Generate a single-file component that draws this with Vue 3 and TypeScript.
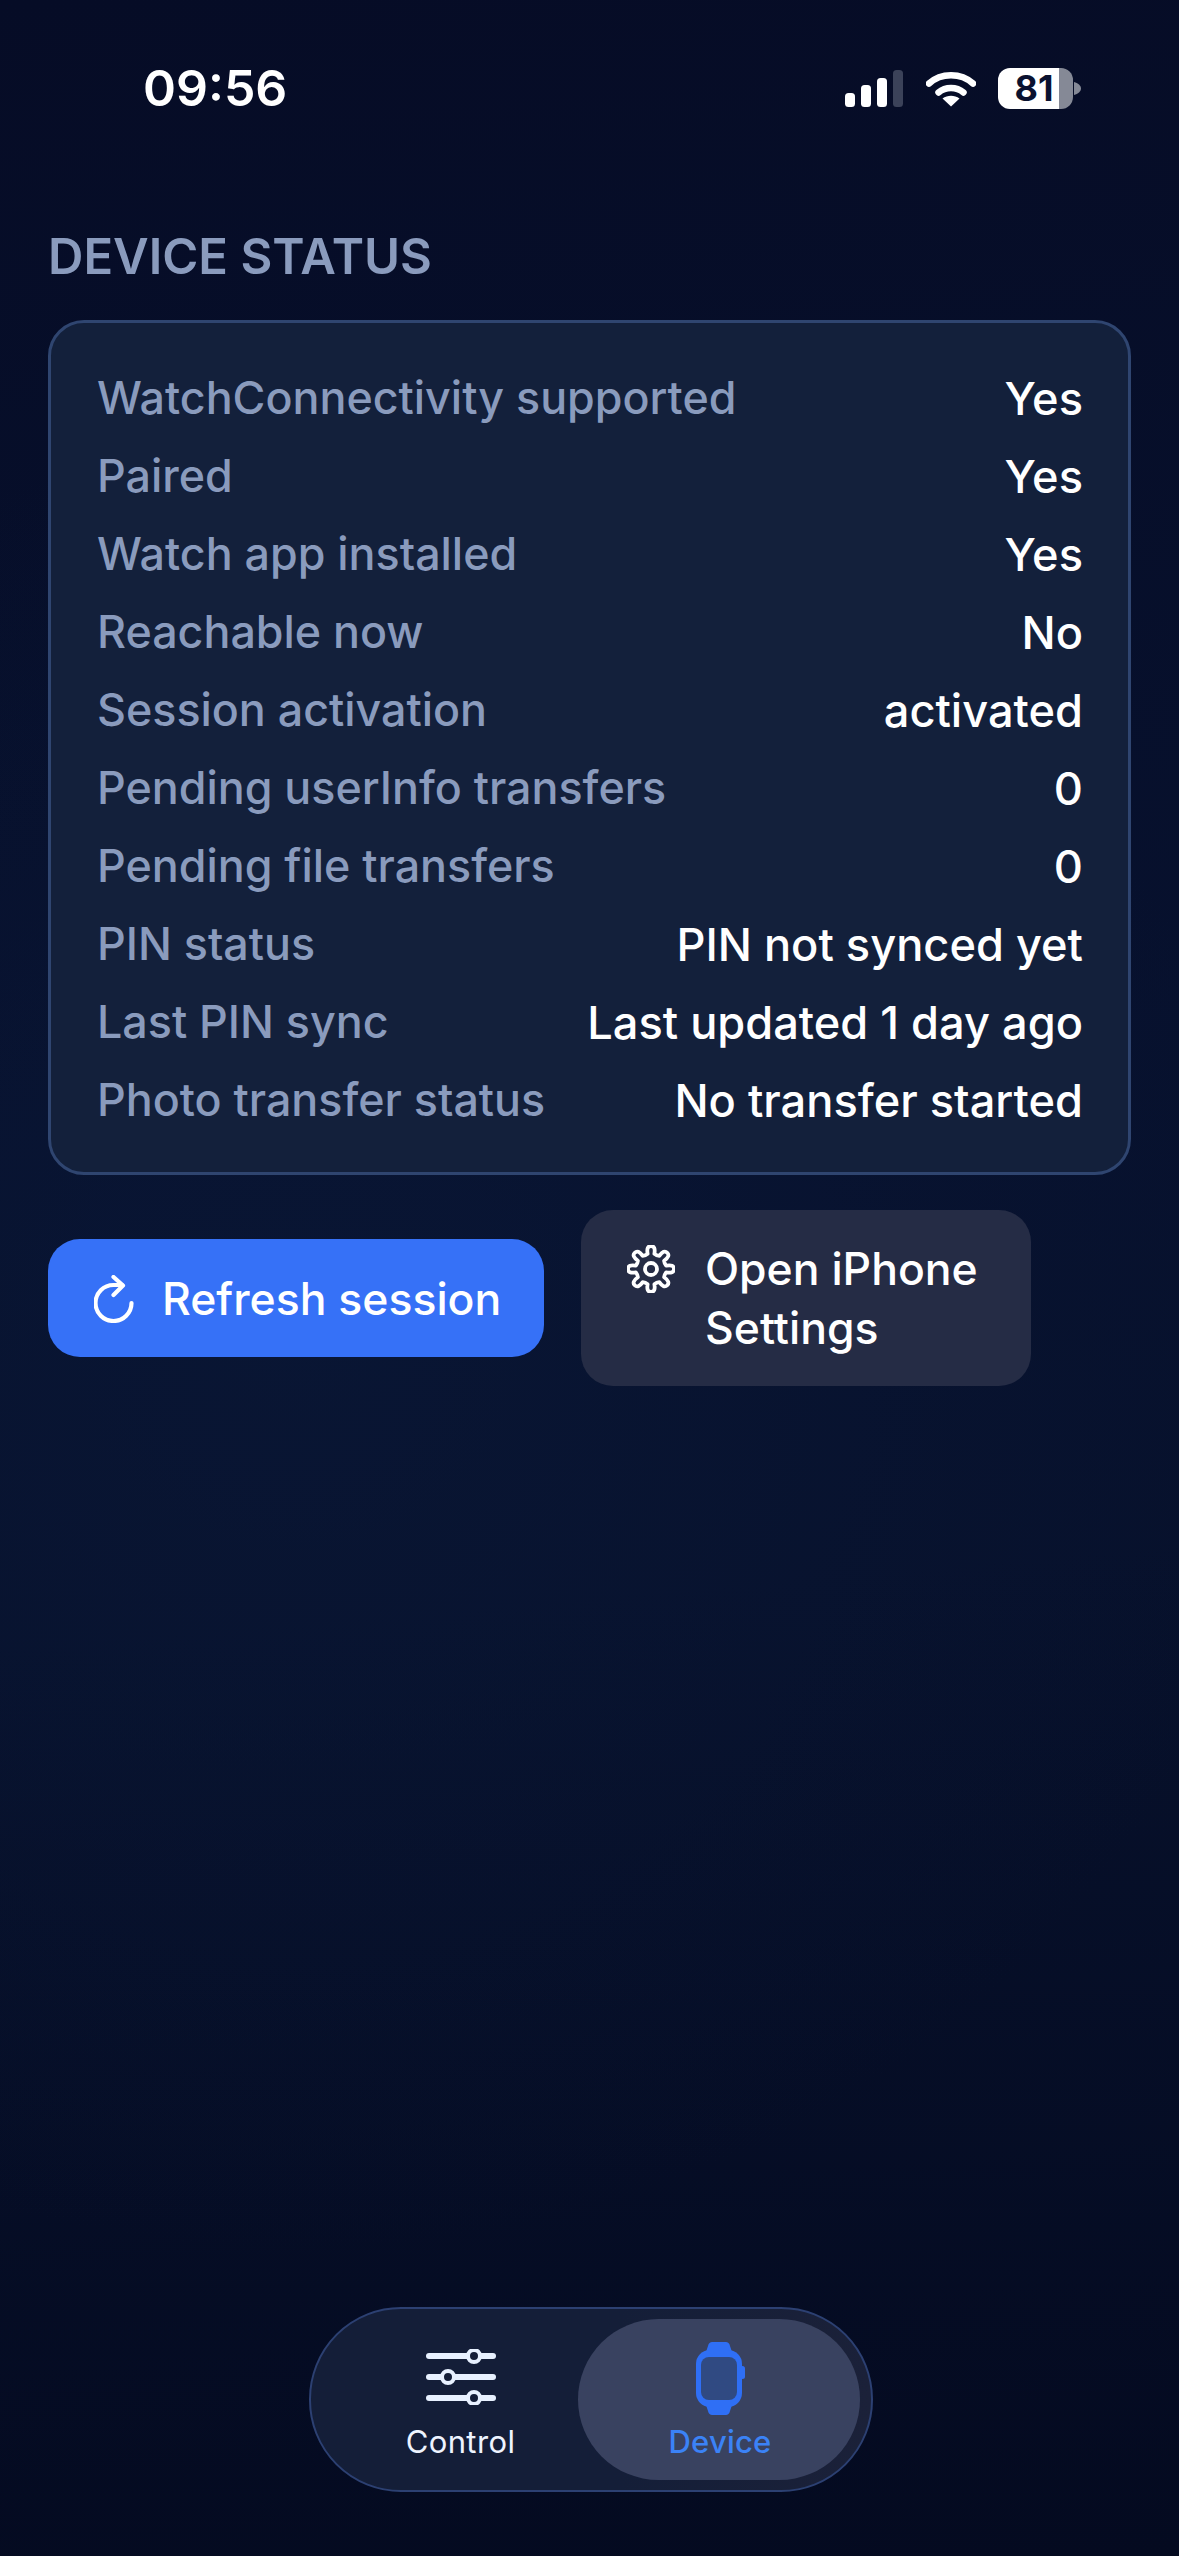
<script setup lang="ts">
const rows: Array<[string, string]> = [
  ['WatchConnectivity supported', 'Yes'],
  ['Paired', 'Yes'],
  ['Watch app installed', 'Yes'],
  ['Reachable now', 'No'],
  ['Session activation', 'activated'],
  ['Pending userInfo transfers', '0'],
  ['Pending file transfers', '0'],
  ['PIN status', 'PIN not synced yet'],
  ['Last PIN sync', 'Last updated 1 day ago'],
  ['Photo transfer status', 'No transfer started'],
];

// 8-tooth gear outline, centred on 24,24
const gearPath = (() => {
  const teeth = 8;
  const out: string[] = [];
  for (let i = 0; i < teeth; i++) {
    const a = (i / teeth) * Math.PI * 2 - Math.PI / 2;
    const step = (Math.PI * 2) / teeth;
    const p = (r: number, t: number) =>
      `${(24 + r * Math.cos(t)).toFixed(2)} ${(24 + r * Math.sin(t)).toFixed(2)}`;
    out.push(`${i === 0 ? 'M' : 'L'}${p(15.5, a - step * 0.28)}`);
    out.push(`Q${p(23.5, a - step * 0.26)} ${p(23, a)}`);
    out.push(`Q${p(23.5, a + step * 0.26)} ${p(15.5, a + step * 0.28)}`);
    out.push(`Q${p(14.5, a + step * 0.5)} ${p(15.5, a + step * 0.72)}`);
  }
  return out.join(' ') + ' Z';
})();
</script>

<template>
  <div class="screen">
    <div class="status-bar">
      <span class="time">09:56</span>
      <div class="status-icons">
        <svg class="signal" width="58" height="37" viewBox="0 0 58 37">
          <rect x="0" y="23" width="10" height="14" rx="3.5" fill="#fff" />
          <rect x="16" y="15" width="10" height="22" rx="3.5" fill="#fff" />
          <rect x="32" y="8" width="10" height="29" rx="3.5" fill="#fff" />
          <rect x="48" y="0" width="10" height="37" rx="3.5" fill="#3b4259" />
        </svg>
        <svg class="wifi" width="50" height="38" viewBox="0 0 50 38" fill="none">
          <path d="M3 14.5C15 3.5 35 3.5 47 14.5" stroke="#fff" stroke-width="6.5" stroke-linecap="round" />
          <path d="M12.5 23.5C19.5 17.5 30.5 17.5 37.5 23.5" stroke="#fff" stroke-width="6.5" stroke-linecap="round" />
          <path d="M25 37.5L16.5 29.5C21.5 25.8 28.5 25.8 33.5 29.5Z" fill="#fff" />
        </svg>
        <div class="battery">
          <div class="battery-body">
            <span class="battery-level">81</span>
          </div>
          <svg class="battery-nub" width="7" height="13" viewBox="0 0 7 13">
            <path d="M0 0C4 1 7 3.500 7 6.500C7 9.500 4 12 0 13Z" fill="#858996" />
          </svg>
        </div>
      </div>
    </div>

    <main class="content">
      <h2 class="section-title">DEVICE STATUS</h2>
      <section class="card">
        <div v-for="row in rows" :key="row[0]" class="row">
          <span class="row-label">{{ row[0] }}</span>
          <span class="row-value">{{ row[1] }}</span>
        </div>
      </section>

      <div class="actions">
        <button class="btn btn-primary">
          <svg class="btn-icon" width="40" height="48" viewBox="0 0 40 48" fill="none" stroke="#fff" stroke-width="4.200" stroke-linecap="round" stroke-linejoin="round">
            <path d="M37.500 28A18 18 0 1 1 19.500 10H28" />
            <path d="M19.500 2L29 10.500L19.500 20" />
          </svg>
          <span>Refresh session</span>
        </button>
        <button class="btn btn-secondary">
          <svg class="gear" width="48" height="48" viewBox="0 0 48 48" fill="none" stroke="#fff" stroke-width="3.800" stroke-linejoin="round">
            <path :d="gearPath" />
            <circle cx="24" cy="24" r="6" />
          </svg>
          <span>Open iPhone Settings</span>
        </button>
      </div>
    </main>

    <nav class="tab-bar">
      <div class="tab tab-control">
        <svg width="70" height="56" viewBox="0 0 70 56" fill="none">
          <g stroke="#e8f1ff" stroke-width="6" stroke-linecap="round">
            <path d="M3 7H67" />
            <path d="M3 28H67" />
            <path d="M3 49H67" />
          </g>
          <g fill="#141e38" stroke="#e8f1ff" stroke-width="4">
            <circle cx="48" cy="7" r="6" />
            <circle cx="22" cy="28" r="6" />
            <circle cx="48" cy="49" r="6" />
          </g>
        </svg>
        <span class="tab-label">Control</span>
      </div>
      <div class="tab tab-active">
        <svg class="watch" width="49" height="73" viewBox="0 0 49 73">
          <path d="M10 10L12.500 2.500C13 1 14.500 0 16 0H30C31.500 0 33 1 33.500 2.500L36 10Z" fill="#2f6ff5" />
          <path d="M10 63L12.500 70.500C13 72 14.500 73 16 73H30C31.500 73 33 72 33.500 70.500L36 63Z" fill="#2f6ff5" />
          <rect x="0" y="8" width="46" height="57" rx="14" fill="#2f6ff5" />
          <rect x="44" y="24" width="5" height="13" rx="2.500" fill="#2f6ff5" />
          <rect x="5" y="15" width="36" height="43" rx="8" fill="#304a82" />
        </svg>
        <span class="tab-label">Device</span>
      </div>
    </nav>
  </div>
</template>

<style scoped>
.screen {
  display: flex;
  flex-direction: column;
  width: 1179px;
  height: 2556px;
  overflow: hidden;
  font-family: Inter, "Liberation Sans", sans-serif;
  color: #fff;
  background:
    radial-gradient(ellipse 1000px 900px at 25% 1350px, #0b1a3a80 0%, #0b1a3a00 100%),
    linear-gradient(175deg, #060c26 0%, #07112e 42%, #07112c 62%, #040a20 100%);
}

.status-bar {
  display: flex;
  justify-content: space-between;
  align-items: center;
  height: 176px;
  padding: 0 98px 0 143px;
  box-sizing: border-box;
}

.time {
  font-size: 50px;
  font-weight: 600;
}

.status-icons {
  display: flex;
  align-items: center;
}

.signal {
  margin-right: 23px;
}

.wifi {
  margin-right: 22px;
}

.battery {
  display: flex;
  align-items: center;
  gap: 1px;
}

.battery-body {
  display: flex;
  align-items: center;
  justify-content: center;
  width: 75px;
  height: 41px;
  padding-right: 3px;
  box-sizing: border-box;
  border-radius: 12px;
  background: linear-gradient(90deg, #fff 0, #fff 61px, #858996 61px);
}

.battery-level {
  font-size: 36px;
  font-weight: 700;
  color: #0a1230;
}

.content {
  display: flex;
  flex-direction: column;
  padding: 0 48px;
}

.section-title {
  margin: 55px 0 37px;
  font-size: 49px;
  line-height: 52px;
  font-weight: 600;
  color: #8a9bbd;
}

.card {
  display: flex;
  flex-direction: column;
  padding: 36px 45px 33px 46px;
  border: 3px solid #2f4570;
  border-radius: 36px;
  background: #13203b;
}

.row {
  display: flex;
  justify-content: space-between;
  align-items: center;
  height: 78px;
  font-size: 44.8px;
  font-weight: 500;
}

.row-label {
  color: #8a9bbd;
}

.row-value {
  font-size: 45.2px;
  color: #fff;
}

.actions {
  display: flex;
  align-items: center;
  gap: 37px;
  margin-top: 35px;
}

.btn {
  display: flex;
  border: 0;
  color: #fff;
  font-family: inherit;
  font-size: 44.5px;
  font-weight: 500;
  line-height: 59px;
  text-align: left;
}

.btn-primary {
  align-items: center;
  gap: 28px;
  width: 496px;
  height: 118px;
  padding: 2px 0 0 46px;
  border-radius: 32px;
  background: #3671f7;
}

.btn-secondary {
  align-items: flex-start;
  gap: 30px;
  width: 450px;
  height: 176px;
  padding: 30px 40px 0 46px;
  box-sizing: border-box;
  border-radius: 32px;
  background: #252c45;
}

.gear {
  flex: none;
  margin-top: 5px;
}

.tab-bar {
  display: flex;
  align-items: stretch;
  align-self: center;
  width: 564px;
  height: 185px;
  margin: auto 0 64px 2px;
  padding: 10px 11px 10px 9px;
  box-sizing: border-box;
  border: 2.5px solid #2c4072;
  border-radius: 92px;
  background: linear-gradient(90deg, #141e38 55%, #1b2139 100%);
}

.tab {
  display: flex;
  flex-direction: column;
  align-items: center;
}

.tab-control {
  flex: 1;
  padding: 30px 0 0 24px;
  gap: 17px;
}

.tab-active {
  width: 282px;
  padding: 23px 0 0 3px;
  box-sizing: border-box;
  gap: 7px;
  border-radius: 81px;
  background: #394260;
}

.tab-label {
  font-size: 31px;
  line-height: 40px;
  font-weight: 400;
  letter-spacing: 0.4px;
  color: #eef4ff;
}

.tab-active .tab-label {
  font-weight: 500;
  letter-spacing: 0.2px;
  color: #3b82f6;
}
</style>

<style>
html,
body {
  margin: 0;
  background: #060c26;
}
</style>
